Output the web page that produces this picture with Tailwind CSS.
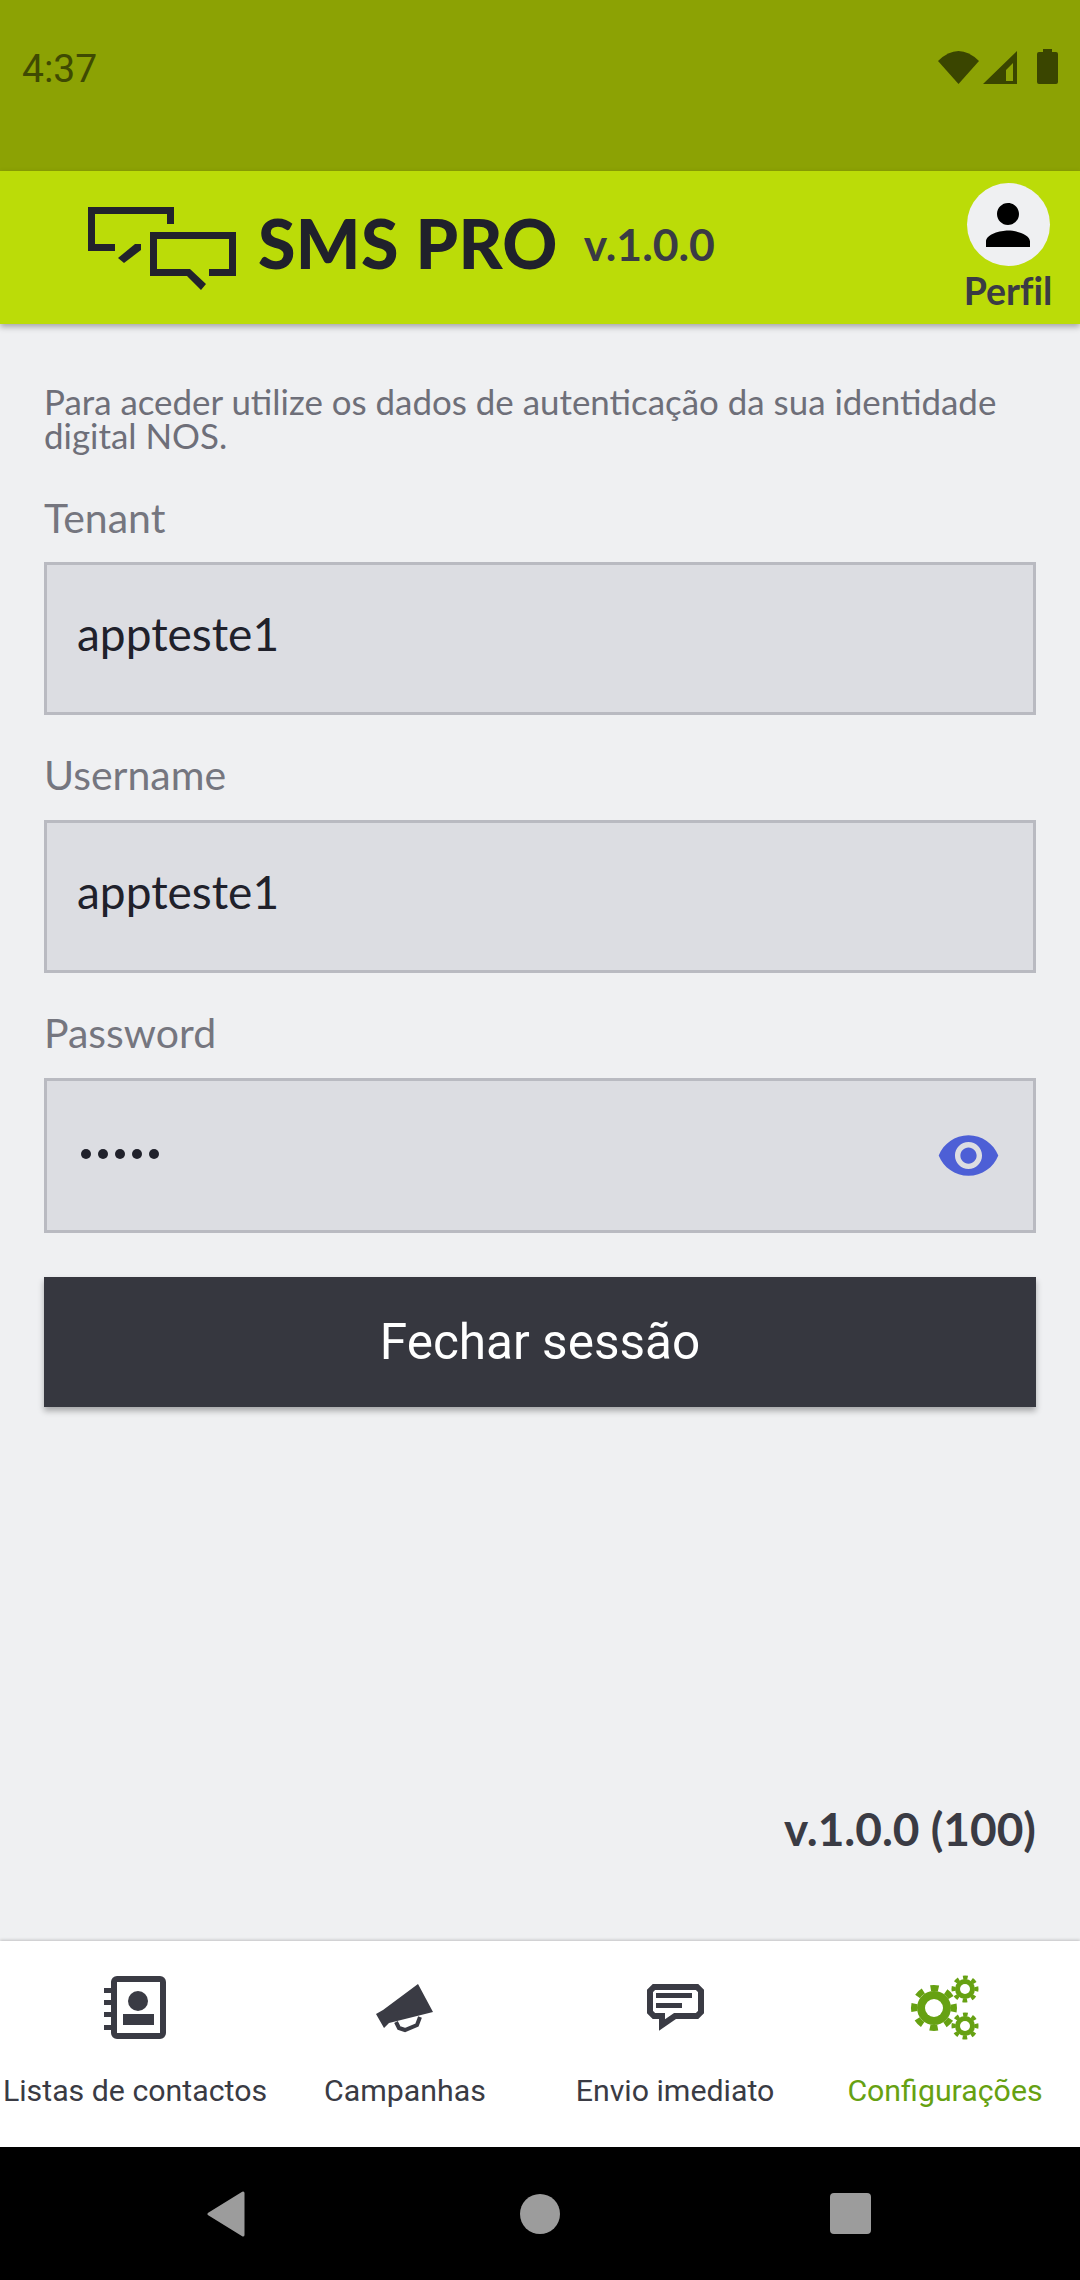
<!DOCTYPE html>
<html><head><meta charset="utf-8"><script src="https://cdn.jsdelivr.net/npm/@tailwindcss/browser@4"></script></head>
<body class="m-0">
<div class="w-[1080px] h-[2280px] flex flex-col overflow-hidden bg-[#eff0f2] font-['Lato',sans-serif]">
  <div class="h-[171px] shrink-0 bg-[#8ca204] flex items-start justify-between pl-[22px] pr-[20px] pt-[48px]">
    <span class="font-['Roboto',sans-serif] text-[39px] leading-[42px] text-[#3f4a02]">4:37</span>
    <svg width="122" height="38" viewBox="938 48 122 38" fill="#3a4500">
      <path d="M938 61Q958.500 41 979 61L958.500 84Z"/>
      <path fill-rule="evenodd" d="M1017 51V84H983ZM1013 63L1006 70V81H1013Z"/>
      <path d="M1043 52V49H1052V52H1056Q1058 52 1058 54V82Q1058 84 1056 84H1039Q1037 84 1037 82V54Q1037 52 1039 52Z"/>
    </svg>
  </div>
  <div class="relative z-10 h-[153px] shrink-0 bg-[#bbdc08] shadow-[0_3px_6px_rgba(0,0,0,0.3)] flex items-start pl-[88px] pr-[28px]">
    <svg class="mt-[36px] shrink-0" width="150" height="83" viewBox="88 207 150 83" fill="#22222c">
      <path d="M88 207H174V224H167V214H95V244H115V251H88Z"/>
      <path d="M118 258L135 244H141V250L124 263Z"/>
      <path d="M150 232H236V276H209V269H229V239H157V269H190L206 284L201 290L187 276H150Z"/>
    </svg>
    <span class="ml-[20px] mt-[32px] text-[68px] leading-[80px] font-black text-[#20212b] tracking-[0.4px]">SMS PRO</span>
    <span class="ml-[26px] mt-[47px] text-[44.5px] leading-[52px] font-bold text-[#3a3b44]">v.1.0.0</span>
    <div class="ml-auto flex flex-col items-center mt-[12px] w-[88px]">
      <div class="w-[83px] h-[83px] rounded-full bg-[#eff0f2] flex items-center justify-center">
        <svg width="66" height="66" viewBox="0 0 24 24" fill="#000"><path d="M12 12c2.210 0 4-1.790 4-4s-1.790-4-4-4-4 1.790-4 4 1.790 4 4 4zm0 2c-2.670 0-8 1.340-8 4v2h16v-2c0-2.660-5.330-4-8-4z"/></svg>
      </div>
      <span class="mt-[4px] text-[37.5px] leading-[42px] font-bold text-[#3a3b44] whitespace-nowrap [font-variant-ligatures:none]">Perfil</span>
    </div>
  </div>
  <main class="flex-1 flex flex-col px-[44px] pt-[61px]">
    <p class="text-[34.9px] leading-[34px] text-[#6e6f79]">Para aceder utilize os dados de autenticação da sua identidade digital NOS.</p>
    <label class="mt-[40px] text-[41px] leading-[50px] text-[#75767f]">Tenant</label>
    <div class="mt-[19px] h-[153px] bg-[#dcdde2] border-[3px] border-[#b9bac1] flex items-center pl-[30px]"><span class="text-[46px] leading-[50px] text-[#20212b] -mt-[9px]">appteste1</span></div>
    <label class="mt-[35px] text-[41px] leading-[50px] text-[#75767f]">Username</label>
    <div class="mt-[20px] h-[153px] bg-[#dcdde2] border-[3px] border-[#b9bac1] flex items-center pl-[30px]"><span class="text-[46px] leading-[50px] text-[#20212b] -mt-[9px]">appteste1</span></div>
    <label class="mt-[35px] text-[41px] leading-[50px] text-[#75767f]">Password</label>
    <div class="mt-[20px] h-[155px] bg-[#dcdde2] border-[3px] border-[#b9bac1] flex items-center justify-between pl-[34px] pr-[32px]">
      <span class="flex gap-[7px] -mt-[4px]"><i class="block w-[10px] h-[10px] rounded-full bg-[#20212b]"></i><i class="block w-[10px] h-[10px] rounded-full bg-[#20212b]"></i><i class="block w-[10px] h-[10px] rounded-full bg-[#20212b]"></i><i class="block w-[10px] h-[10px] rounded-full bg-[#20212b]"></i><i class="block w-[10px] h-[10px] rounded-full bg-[#20212b]"></i></span>
      <svg width="65" height="65" viewBox="0 0 24 24" fill="#4d5fd6"><path d="M12 4.500C7 4.500 2.730 7.610 1 12c1.730 4.390 6 7.500 11 7.500s9.270-3.110 11-7.500c-1.730-4.390-6-7.500-11-7.500zM12 17c-2.760 0-5-2.240-5-5s2.240-5 5-5 5 2.240 5 5-2.240 5-5 5zm0-8c-1.660 0-3 1.340-3 3s1.340 3 3 3 3-1.340 3-3-1.340-3-3-3z"/></svg>
    </div>
    <button class="mt-[44px] h-[130px] bg-[#36373f] text-white text-[49.5px] font-['Roboto',sans-serif] shadow-[0_4px_6px_rgba(0,0,0,0.3)]">Fechar sessão</button>
    <div class="mt-auto mb-[87px] text-right text-[46px] leading-[50px] font-bold text-[#3a3b44]">v.1.0.0 (100)</div>
  </main>
  <nav class="relative h-[206px] shrink-0 bg-white shadow-[0_-1px_3px_rgba(0,0,0,0.2)] grid grid-cols-4 font-['Roboto',sans-serif] text-[30.3px] leading-[36px] text-[#3a3b44]">
    <div class="flex flex-col items-center pt-[34px]">
      <svg width="66" height="66" viewBox="102 1975 66 66">
        <rect x="114" y="1979" width="49" height="57" rx="3" fill="none" stroke="#3a3b44" stroke-width="6"/>
        <path d="M104 1988h7v5h-7zM104 2000h7v5h-7zM104 2012h7v5h-7zM104 2025h7v5h-7zM123 2014h31v11h-31z" fill="#3a3b44"/>
        <circle cx="138" cy="2001" r="10" fill="#3a3b44"/>
      </svg>
      <span class="mt-[32px] whitespace-nowrap">Listas de contactos</span>
    </div>
    <div class="flex flex-col items-center pt-[34px]">
      <svg width="66" height="66" viewBox="372 1975 66 66" fill="#3a3b44">
        <path d="M418 1984L433 2012L389 2023L384 2028L376 2014L383 2010Z"/>
        <path d="M396 2022L399 2028L405 2030L417 2025L420 2017" fill="none" stroke="#3a3b44" stroke-width="4"/>
      </svg>
      <span class="mt-[32px] whitespace-nowrap">Campanhas</span>
    </div>
    <div class="flex flex-col items-center pt-[34px]">
      <svg width="66" height="66" viewBox="642 1975 66 66" fill="#3a3b44">
        <path d="M654 1987H697L701 1991V2012L697 2016H675L662 2025V2016H654L650 2012V1991Z" fill="none" stroke="#3a3b44" stroke-width="6"/>
        <path d="M656 1993h36v5h-36zM656 2003h26v5h-26z"/>
      </svg>
      <span class="mt-[32px] whitespace-nowrap">Envio imediato</span>
    </div>
    <div class="flex flex-col items-center pt-[34px] text-[#66a112]">
      <svg width="72" height="66" viewBox="909 1975 72 66" fill="#66a112">
        <circle cx="934" cy="2008" r="17"/><circle cx="934" cy="2008" r="20" fill="none" stroke="#66a112" stroke-width="6" stroke-dasharray="7.850 7.850" transform="rotate(-11.250 934 2008)"/><circle cx="934" cy="2008" r="9" fill="#fff"/>
        <circle cx="965" cy="1989" r="10"/><circle cx="965" cy="1989" r="11.500" fill="none" stroke="#66a112" stroke-width="4" stroke-dasharray="4.516 4.516" transform="rotate(-11.250 965 1989)"/><circle cx="965" cy="1989" r="5" fill="#fff"/>
        <circle cx="965" cy="2026" r="10"/><circle cx="965" cy="2026" r="11.500" fill="none" stroke="#66a112" stroke-width="4" stroke-dasharray="4.516 4.516" transform="rotate(-11.250 965 2026)"/><circle cx="965" cy="2026" r="5" fill="#fff"/>
      </svg>
      <span class="mt-[32px] whitespace-nowrap">Configurações</span>
    </div>
  </nav>
  <div class="h-[133px] shrink-0 bg-black flex items-center pl-[207px]">
    <svg width="38" height="46" viewBox="0 0 38 46"><path d="M2 23L36 2V44Z" fill="#9c9c9c" stroke="#9c9c9c" stroke-width="3" stroke-linejoin="round"/></svg>
    <div class="ml-[275px] w-[40px] h-[40px] rounded-full bg-[#9c9c9c]"></div>
    <div class="ml-[270px] w-[41px] h-[41px] rounded-[4px] bg-[#9c9c9c]"></div>
  </div>
</div>
</body></html>
